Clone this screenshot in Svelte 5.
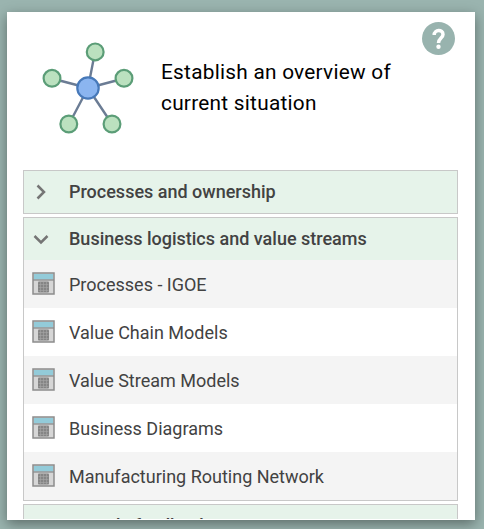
<script>
  const items = [
    'Processes - IGOE',
    'Value Chain Models',
    'Value Stream Models',
    'Business Diagrams',
    'Manufacturing Routing Network'
  ];
</script>

<main class="page">
  <section class="card">
    <header>
      <svg class="network" width="96" height="96" viewBox="0 0 96 96">
        <g stroke="#6b7c94" stroke-width="2.4">
          <path d="M48 50L55 14M48 50L12 40.500M48 50L84 40.500M48 50L29 86M48 50L72 86" />
        </g>
        <g fill="#bbe1bf" stroke="#5b9d77" stroke-width="2.2">
          <circle cx="55.200" cy="13.900" r="8.400" />
          <circle cx="12" cy="40.300" r="8.400" />
          <circle cx="84" cy="40.300" r="8.400" />
          <circle cx="28.800" cy="86" r="8.400" />
          <circle cx="72" cy="86" r="8.400" />
        </g>
        <circle cx="48" cy="50" r="10.700" fill="#8bb5f0" stroke="#4779b9" stroke-width="2.2" />
      </svg>
      <h1>Establish an overview of current situation</h1>
      <svg class="help" width="33" height="33" viewBox="0 0 33 33">
        <circle cx="16.500" cy="16.500" r="16.500" fill="#98b3ae" />
        <path d="M12.200 13C12.200 7.200 21 7.200 21 12.400C21 16 16.500 16 16.500 21" fill="none" stroke="#fff" stroke-width="3.500" />
        <circle cx="16.500" cy="24.800" r="2.200" fill="#fff" />
      </svg>
    </header>
    <div class="accordion">
      <div class="panel">
        <div class="title">
          <svg width="18" height="18" viewBox="0 0 18 18"><path d="M5.500 2.500L12 9L5.500 15.500" /></svg>
          <span>Processes and ownership</span>
        </div>
      </div>
      <div class="panel">
        <div class="title">
          <svg width="18" height="18" viewBox="0 0 18 18"><path d="M2.500 6L9 12.500L15.500 6" /></svg>
          <span>Business logistics and value streams</span>
        </div>
        {#each items as item}
          <div class="item">
            <svg width="23" height="23" viewBox="0 0 23 23">
              <rect x="1" y="1" width="21" height="21" fill="#d6d6d6" stroke="#8c8c8c" stroke-width="1.500" />
              <path d="M2 2H21V7.500H2Z" fill="#93cbd9" />
              <path d="M1 8H22" stroke="#8c8c8c" stroke-width="1.300" />
              <rect x="6" y="9.500" width="11" height="11" rx="1" fill="#858585" />
              <path d="M8.500 10V20M11.500 10V20M14.500 10V20M6.500 12.500H16.500M6.500 15.500H16.500M6.500 18.500H16.500" stroke="#a6a6a6" stroke-width=".6" />
            </svg>
            <span>{item}</span>
          </div>
        {/each}
      </div>
      <div class="panel">
        <div class="title">
          <span class="last">Provide feedback</span>
        </div>
      </div>
    </div>
  </section>
</main>

<style>
  .page {
    box-sizing: border-box;
    width: 484px;
    height: 529px;
    padding: 12px 9px 9px 7px;
    overflow: hidden;
    background: #9ab4af;
    font-family: Roboto, sans-serif;
  }
  .card {
    box-sizing: border-box;
    height: 508px;
    padding-bottom: 1px;
    display: flex;
    flex-direction: column;
    background: #fff;
    box-shadow: 0 4px 12px rgba(0, 0, 0, 0.4);
  }
  header {
    display: flex;
    flex: 0 0 158px;
    align-items: flex-start;
  }
  .network { margin: 26px 0 0 33px; }
  h1 {
    width: 245px;
    margin: 45px 0 0 25px;
    font-size: 20.800px;
    line-height: 31px;
    font-weight: 400;
    letter-spacing: 0.260px;
    color: #000;
  }
  .help { margin: 10px 0 0 16px; }
  .accordion {
    flex: 1;
    min-height: 0;
    overflow: hidden;
    padding: 0 17px 0 16px;
  }
  .panel {
    border: 1px solid #c8c8c8;
    margin-bottom: 3px;
  }
  .title, .item {
    display: flex;
    align-items: center;
    font-size: 18px;
    color: #424242;
  }
  .title {
    box-sizing: border-box;
    height: 42px;
    padding: 0 0 2px 8px;
    background: #e6f3ea;
    font-weight: 500;
  }
  .title svg { margin: 2px 19px 0 0; }
  .title path { fill: none; stroke: #757575; stroke-width: 2.500; }
  .last { margin-left: 37px; }
  .item {
    height: 48px;
    padding-left: 8px;
    background: #fff;
  }
  .item:nth-child(even) { background: #f4f4f4; }
  .item svg { margin: 0 14px 2px 0; }
</style>
